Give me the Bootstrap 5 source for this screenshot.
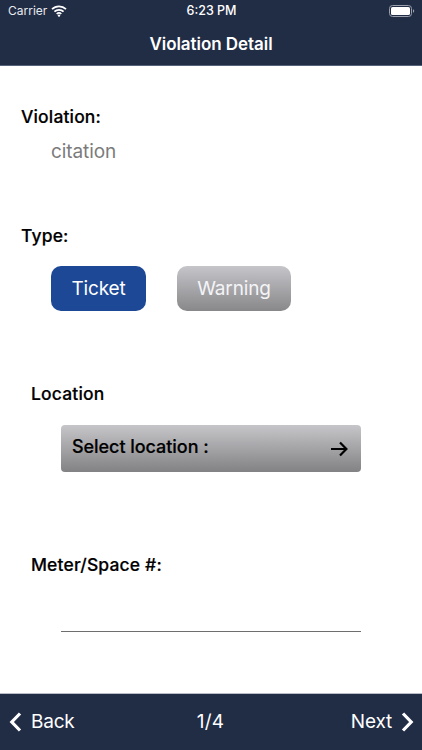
<!DOCTYPE html>
<html lang="en">
<head>
<meta charset="utf-8">
<title>Violation Detail</title>
<link href="https://cdn.jsdelivr.net/npm/bootstrap@5.3.0/dist/css/bootstrap.min.css" rel="stylesheet">
<style>
html,body{height:750px;overflow:hidden}
body{font-family:Inter,"Liberation Sans",sans-serif;background:#fff;color:#000}
.app-top{background:#212c45;color:#fff;height:66px;border-bottom:1px solid #56617a}
.status-row{height:22px;padding:0 7px 0 8px;font-size:12px;line-height:22px;color:#e8eaee}
.status-time{font-weight:500;color:#fff;font-size:12.5px}
.status-side{width:100px}
.title-row{height:43px;font-size:17px;font-weight:600;line-height:44px;letter-spacing:-.05px}
.app-main{flex:1 1 auto;min-height:0}
.field-label{font-size:17.5px;font-weight:500;line-height:22px;letter-spacing:.15px;-webkit-text-stroke:.2px #000}
.lbl-violation{margin:40px 0 0 21px}
.val-citation{margin:12px 0 0 51px;font-size:19px;line-height:24px;color:#7b7b7b;letter-spacing:-.1px}
.lbl-type{margin:61px 0 0 21px}
.type-row{margin:19px 0 0 51px;gap:31px}
.type-btn{height:45px;border-radius:10px;font-size:19px;line-height:45px;color:#fff;text-align:center;padding:0;border:0;letter-spacing:-.15px}
.btn-ticket{width:95px;background:#1c4896}
.btn-warning-gray{width:114px;background:linear-gradient(#c5c5ca,#88888a);color:#f4f4f6}
.lbl-location{margin:72px 0 0 31px}
.select-bar{margin:20px 0 0 61px;width:300px;height:47px;border-radius:4px;background:linear-gradient(#c6c6ca,#828284);padding:0 13px 0 11px;font-size:18px;font-weight:500;letter-spacing:-.05px;-webkit-text-stroke:.2px #000}
.select-bar span{position:relative;top:-2px}
.lbl-meter{margin:82px 0 0 31px}
.meter-line{margin:55px 0 0 61px;width:300px;border-bottom:1px solid #6e6e6e;height:1px}
.app-bottom{background:#212c45;color:#fff;height:57px;border-top:1px solid #b9bcc4;padding:0 8px 0 9px;font-size:19px;line-height:24px;letter-spacing:-.2px}
.bottom-side{width:110px;gap:9px}
.pager{font-weight:400;position:relative;left:-1px;letter-spacing:.2px}
</style>
</head>
<body class="d-flex flex-column">
<header class="app-top flex-shrink-0">
  <div class="status-row d-flex justify-content-between align-items-center">
    <div class="status-side d-flex align-items-center gap-1">
      <span>Carrier</span>
      <svg width="16" height="12" viewBox="0 0 16 12"><path d="M1 4.2a10 10 0 0 1 14 0M3.4 6.7a6.6 6.6 0 0 1 9.2 0M5.7 9a3.3 3.3 0 0 1 4.6 0" fill="none" stroke="#fff" stroke-width="1.7"/><circle cx="8" cy="10.6" r="1.2" fill="#fff"/></svg>
    </div>
    <div class="status-time">6:23 PM</div>
    <div class="status-side d-flex justify-content-end">
      <svg width="26" height="12" viewBox="0 0 26 12"><rect x=".5" y=".5" width="22" height="11" rx="3" fill="none" stroke="#9aa0ad"/><rect x="2" y="2" width="19" height="8" rx="1.6" fill="#fff"/><path d="M24 4.2c.8.3 1.2 1 1.2 1.8s-.4 1.5-1.2 1.8z" fill="#9aa0ad"/></svg>
    </div>
  </div>
  <div class="title-row text-center">Violation Detail</div>
</header>
<main class="app-main">
  <div class="field-label lbl-violation">Violation:</div>
  <div class="val-citation">citation</div>
  <div class="field-label lbl-type">Type:</div>
  <div class="type-row d-flex">
    <button type="button" class="btn type-btn btn-ticket">Ticket</button>
    <button type="button" class="btn type-btn btn-warning-gray">Warning</button>
  </div>
  <div class="field-label lbl-location">Location</div>
  <div class="select-bar d-flex justify-content-between align-items-center">
    <span>Select location :</span>
    <svg width="18" height="16" viewBox="0 0 18 16"><path d="M1 8h15M10 1.5 16.4 8 10 14.5" fill="none" stroke="#000" stroke-width="2.2"/></svg>
  </div>
  <div class="field-label lbl-meter">Meter/Space #:</div>
  <div class="meter-line"></div>
</main>
<footer class="app-bottom flex-shrink-0 d-flex justify-content-between align-items-center">
  <div class="bottom-side d-flex align-items-center">
    <svg width="13" height="20" viewBox="0 0 13 20"><path d="M11 1.5 2.8 10l8.2 8.5" fill="none" stroke="#fff" stroke-width="3.2"/></svg>
    <span>Back</span>
  </div>
  <div class="pager">1/4</div>
  <div class="bottom-side d-flex align-items-center justify-content-end">
    <span>Next</span>
    <svg width="13" height="20" viewBox="0 0 13 20"><path d="m2 1.5 8.2 8.5L2 18.5" fill="none" stroke="#fff" stroke-width="3.2"/></svg>
  </div>
</footer>
<script src="https://cdn.jsdelivr.net/npm/bootstrap@5.3.0/dist/js/bootstrap.bundle.min.js"></script>
</body>
</html>
